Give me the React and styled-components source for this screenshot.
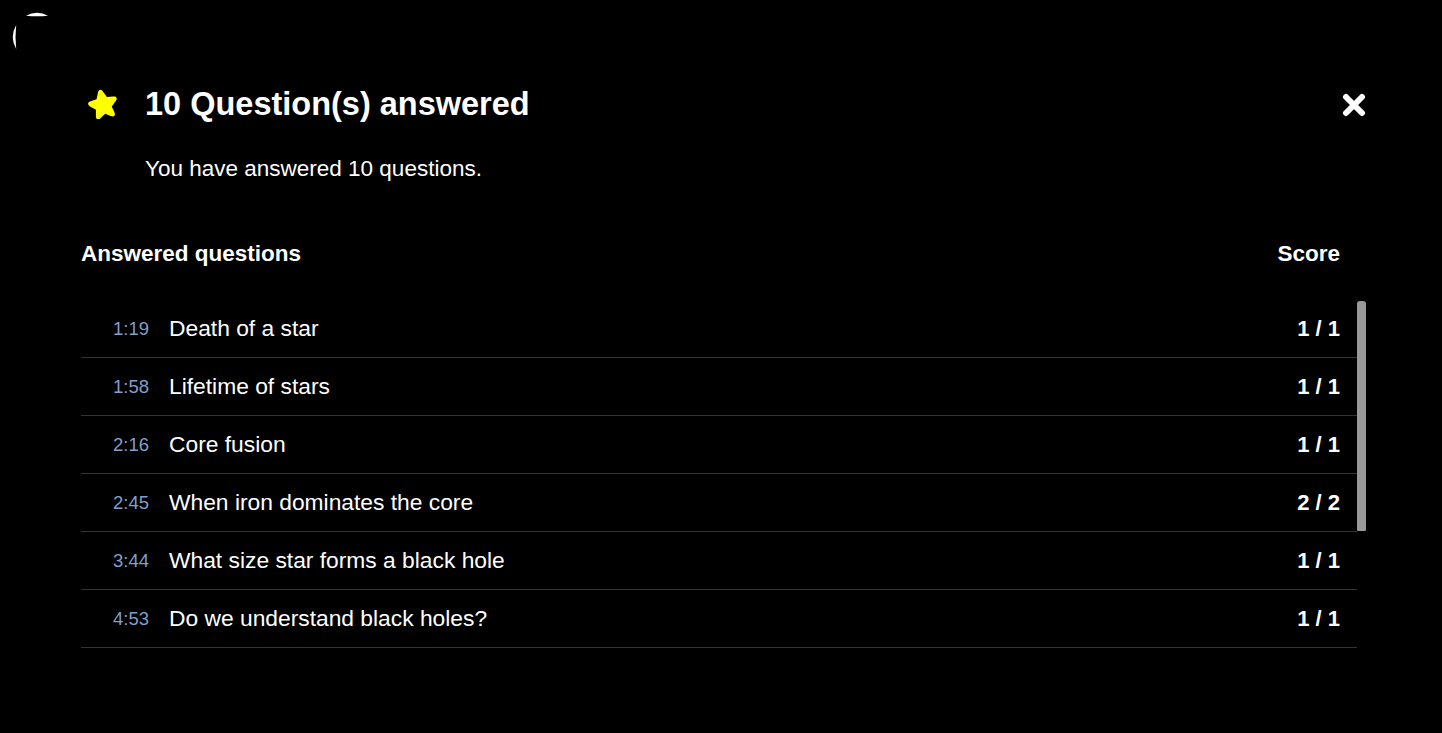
import React from "react";
import styled, { createGlobalStyle } from "styled-components";

const questions = [
  { time: "1:19", title: "Death of a star", score: "1 / 1" },
  { time: "1:58", title: "Lifetime of stars", score: "1 / 1" },
  { time: "2:16", title: "Core fusion", score: "1 / 1" },
  { time: "2:45", title: "When iron dominates the core", score: "2 / 2" },
  { time: "3:44", title: "What size star forms a black hole", score: "1 / 1" },
  { time: "4:53", title: "Do we understand black holes?", score: "1 / 1" },
];

const GlobalStyle = createGlobalStyle`
  html, body {
    margin: 0;
    padding: 0;
    background: #000;
    color: #fff;
    font-family: "Liberation Sans", Arial, sans-serif;
  }
`;

const App = () => {
  return (
    <>
      <GlobalStyle />
      <Page>
        <Spinner width="60" height="60" viewBox="0 0 60 60">
          <path d="M26 15.7 A24 24 0 0 1 48 15.7 Q37 16.9 26 15.7 Z" fill="#fff" />
          <path d="M16.2 25 A24 24 0 0 0 16.2 49 Q14.8 37 16.2 25 Z" fill="#fff" />
        </Spinner>
        <Dialog>
          <HeaderRow>
            <TitleGroup>
              <Star width="30" height="30" viewBox="2 2 26 26">
                <path
                  d="M15 2.5 C16.2 2.5 16.8 3.4 17.4 4.8 L19.6 9.8 L25 10.4 C26.6 10.6 27.4 11.2 27.6 12.2 C27.8 13.2 27.2 14 26.1 15 L22 18.6 L23.2 24 C23.5 25.6 23.3 26.5 22.5 27 C21.7 27.6 20.7 27.3 19.4 26.5 L15 23.7 L10.6 26.5 C9.3 27.3 8.3 27.6 7.5 27 C6.7 26.5 6.5 25.6 6.8 24 L8 18.6 L3.9 15 C2.8 14 2.2 13.2 2.4 12.2 C2.6 11.2 3.4 10.6 5 10.4 L10.4 9.8 L12.6 4.8 C13.2 3.4 13.8 2.5 15 2.5 Z"
                  fill="#ffff00"
                  transform="rotate(-12 15 15)"
                />
              </Star>
              <Title>10 Question(s) answered</Title>
            </TitleGroup>
            <CloseButton aria-label="Close">
              <svg width="24" height="24" viewBox="0 0 24 24">
                <path
                  d="M4 4 L20 20 M20 4 L4 20"
                  stroke="#fff"
                  strokeWidth="6"
                  strokeLinecap="round"
                />
              </svg>
            </CloseButton>
          </HeaderRow>
          <Subtitle>You have answered 10 questions.</Subtitle>

          <ListHeader>
            <span>Answered questions</span>
            <span>Score</span>
          </ListHeader>
          <ListArea>
            <List>
              {questions.map((q) => (
                <Row key={q.time}>
                  <Time>{q.time}</Time>
                  <QuestionTitle>{q.title}</QuestionTitle>
                  <Score>{q.score}</Score>
                </Row>
              ))}
            </List>
            <ScrollTrack>
              <ScrollThumb $size={230} />
            </ScrollTrack>
          </ListArea>
        </Dialog>
      </Page>
    </>
  );
};

export default App;

const Page = styled.div`
  position: relative;
  min-height: 100vh;
  background: #000;
`;

const Spinner = styled.svg`
  position: absolute;
  top: 0;
  left: 0;
`;

const Dialog = styled.div`
  padding: 84px 76px 0 81px;
`;

const HeaderRow = styled.div`
  display: flex;
  align-items: center;
  justify-content: space-between;
  height: 40px;
`;

const TitleGroup = styled.div`
  display: flex;
  align-items: center;
  gap: 27px;
  padding-left: 7px;
`;

const Star = styled.svg`
  display: block;
  flex-shrink: 0;
`;

const Title = styled.h1`
  margin: 0;
  font-size: 32.5px;
  font-weight: 700;
  line-height: 40px;
`;

const CloseButton = styled.button`
  display: flex;
  align-items: center;
  justify-content: center;
  padding: 0;
  border: none;
  background: transparent;
  cursor: pointer;
  margin-top: 2px;
`;

const Subtitle = styled.p`
  margin: 31px 0 0 64px;
  font-size: 22.5px;
  line-height: 28px;
`;

const ListHeader = styled.div`
  display: flex;
  justify-content: space-between;
  margin-top: 57px;
  padding-right: 26px;
  font-size: 22.5px;
  font-weight: 700;
  line-height: 28px;
`;

const ListArea = styled.div`
  display: flex;
  margin-top: 32px;
  height: 349px;
`;

const List = styled.div`
  flex: 1;
  overflow: hidden;
`;

const ScrollTrack = styled.div`
  width: 9px;
  flex-shrink: 0;
  padding-top: 1px;
`;

const ScrollThumb = styled.div`
  height: ${(p) => p.$size}px;
  background: #999;
  border-radius: 3px 3px 1px 1px;
`;

const Row = styled.div`
  display: flex;
  align-items: center;
  height: 57px;
  padding-right: 17px;
  border-bottom: 1px solid #333;
`;

const Time = styled.span`
  width: 68px;
  flex-shrink: 0;
  text-align: right;
  font-size: 18.5px;
  color: #809fca;
`;

const QuestionTitle = styled.span`
  flex: 1;
  margin-left: 20px;
  font-size: 22.8px;
`;

const Score = styled.span`
  font-size: 22px;
  font-weight: 700;
`;
